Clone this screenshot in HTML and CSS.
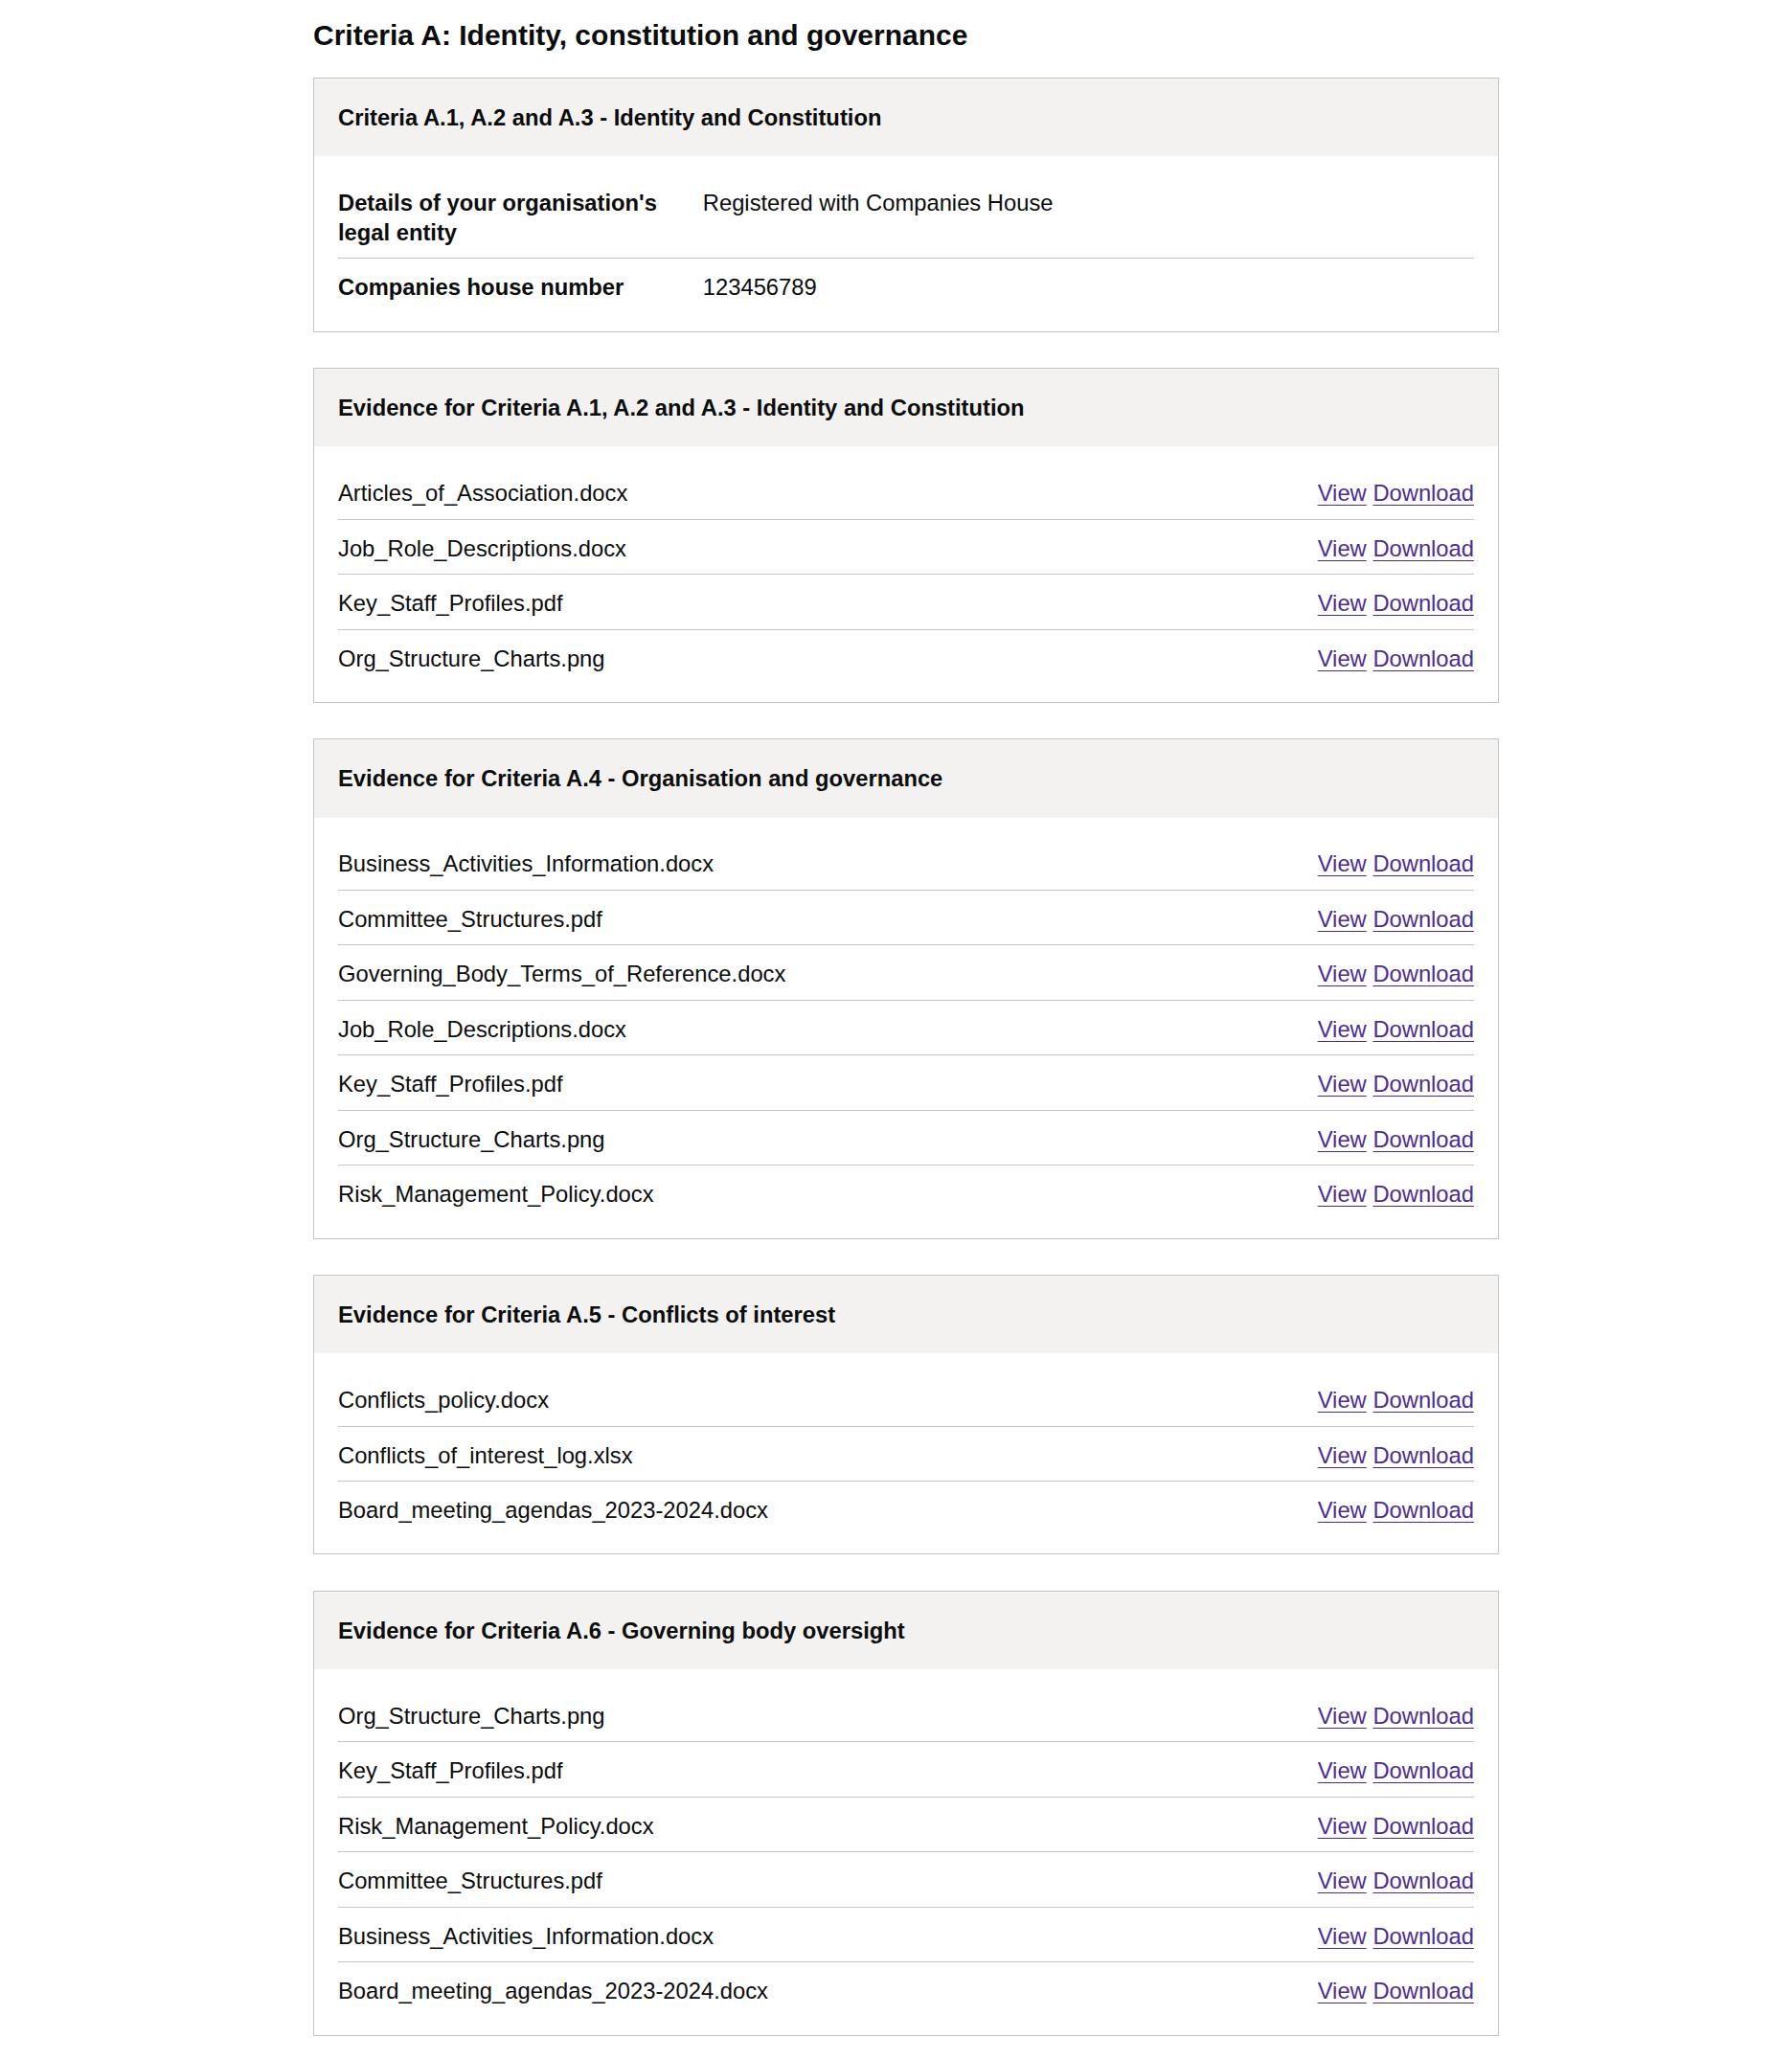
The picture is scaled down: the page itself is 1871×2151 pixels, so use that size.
FILE: index.html
```html
<!DOCTYPE html>
<html lang="en">
<head>
<meta charset="utf-8">
<title>Criteria A: Identity, constitution and governance</title>
<link rel="stylesheet" href="styles.css">
</head>
<body>
<main class="page">
  <h2 class="heading">Criteria A: Identity, constitution and governance</h2>

  <section class="card">
    <div class="card-head"><h3 class="card-title">Criteria A.1, A.2 and A.3 - Identity and Constitution</h3></div>
    <div class="card-body">
      <dl class="summary">
        <div class="summary-row">
          <dt class="summary-key">Details of your organisation's legal entity</dt>
          <dd class="summary-value">Registered with Companies House</dd>
        </div>
        <div class="summary-row">
          <dt class="summary-key">Companies house number</dt>
          <dd class="summary-value">123456789</dd>
        </div>
      </dl>
    </div>
  </section>

  <section class="card">
    <div class="card-head"><h3 class="card-title">Evidence for Criteria A.1, A.2 and A.3 - Identity and Constitution</h3></div>
    <div class="card-body">
      <ul class="files">
        <li class="file-row"><span class="file-name">Articles_of_Association.docx</span><span class="file-actions"><a href="#" class="link">View</a> <a href="#" class="link">Download</a></span></li>
        <li class="file-row"><span class="file-name">Job_Role_Descriptions.docx</span><span class="file-actions"><a href="#" class="link">View</a> <a href="#" class="link">Download</a></span></li>
        <li class="file-row"><span class="file-name">Key_Staff_Profiles.pdf</span><span class="file-actions"><a href="#" class="link">View</a> <a href="#" class="link">Download</a></span></li>
        <li class="file-row"><span class="file-name">Org_Structure_Charts.png</span><span class="file-actions"><a href="#" class="link">View</a> <a href="#" class="link">Download</a></span></li>
      </ul>
    </div>
  </section>

  <section class="card">
    <div class="card-head"><h3 class="card-title">Evidence for Criteria A.4 - Organisation and governance</h3></div>
    <div class="card-body">
      <ul class="files">
        <li class="file-row"><span class="file-name">Business_Activities_Information.docx</span><span class="file-actions"><a href="#" class="link">View</a> <a href="#" class="link">Download</a></span></li>
        <li class="file-row"><span class="file-name">Committee_Structures.pdf</span><span class="file-actions"><a href="#" class="link">View</a> <a href="#" class="link">Download</a></span></li>
        <li class="file-row"><span class="file-name">Governing_Body_Terms_of_Reference.docx</span><span class="file-actions"><a href="#" class="link">View</a> <a href="#" class="link">Download</a></span></li>
        <li class="file-row"><span class="file-name">Job_Role_Descriptions.docx</span><span class="file-actions"><a href="#" class="link">View</a> <a href="#" class="link">Download</a></span></li>
        <li class="file-row"><span class="file-name">Key_Staff_Profiles.pdf</span><span class="file-actions"><a href="#" class="link">View</a> <a href="#" class="link">Download</a></span></li>
        <li class="file-row"><span class="file-name">Org_Structure_Charts.png</span><span class="file-actions"><a href="#" class="link">View</a> <a href="#" class="link">Download</a></span></li>
        <li class="file-row"><span class="file-name">Risk_Management_Policy.docx</span><span class="file-actions"><a href="#" class="link">View</a> <a href="#" class="link">Download</a></span></li>
      </ul>
    </div>
  </section>

  <section class="card">
    <div class="card-head"><h3 class="card-title">Evidence for Criteria A.5 - Conflicts of interest</h3></div>
    <div class="card-body">
      <ul class="files">
        <li class="file-row"><span class="file-name">Conflicts_policy.docx</span><span class="file-actions"><a href="#" class="link">View</a> <a href="#" class="link">Download</a></span></li>
        <li class="file-row"><span class="file-name">Conflicts_of_interest_log.xlsx</span><span class="file-actions"><a href="#" class="link">View</a> <a href="#" class="link">Download</a></span></li>
        <li class="file-row"><span class="file-name">Board_meeting_agendas_2023-2024.docx</span><span class="file-actions"><a href="#" class="link">View</a> <a href="#" class="link">Download</a></span></li>
      </ul>
    </div>
  </section>

  <section class="card">
    <div class="card-head"><h3 class="card-title">Evidence for Criteria A.6 - Governing body oversight</h3></div>
    <div class="card-body">
      <ul class="files">
        <li class="file-row"><span class="file-name">Org_Structure_Charts.png</span><span class="file-actions"><a href="#" class="link">View</a> <a href="#" class="link">Download</a></span></li>
        <li class="file-row"><span class="file-name">Key_Staff_Profiles.pdf</span><span class="file-actions"><a href="#" class="link">View</a> <a href="#" class="link">Download</a></span></li>
        <li class="file-row"><span class="file-name">Risk_Management_Policy.docx</span><span class="file-actions"><a href="#" class="link">View</a> <a href="#" class="link">Download</a></span></li>
        <li class="file-row"><span class="file-name">Committee_Structures.pdf</span><span class="file-actions"><a href="#" class="link">View</a> <a href="#" class="link">Download</a></span></li>
        <li class="file-row"><span class="file-name">Business_Activities_Information.docx</span><span class="file-actions"><a href="#" class="link">View</a> <a href="#" class="link">Download</a></span></li>
        <li class="file-row"><span class="file-name">Board_meeting_agendas_2023-2024.docx</span><span class="file-actions"><a href="#" class="link">View</a> <a href="#" class="link">Download</a></span></li>
      </ul>
    </div>
  </section>
</main>
</body>
</html>
```

FILE: styles.css
```css
* {
  box-sizing: border-box;
}

html, body {
  margin: 0;
  padding: 0;
  background: #ffffff;
}

body {
  font-family: "Liberation Sans", Arial, sans-serif;
  color: #0b0c0c;
  font-size: 23.75px;
  line-height: 31.25px;
}

.page {
  width: 1238px;
  margin: 0 0 0 327px;
  padding: 18px 0 30px;
}

.heading {
  margin: 0 0 25px;
  font-size: 30px;
  line-height: 37.5px;
  font-weight: 700;
}

.card {
  border: 1px solid #c3c5c7;
  margin-bottom: 37.5px;
}

.card-head {
  background: #f3f2f1;
  padding: 25px 25px;
}

.card-title {
  margin: 0;
  font-size: 23.75px;
  line-height: 31.25px;
  font-weight: 700;
}

.card-body {
  padding: 18.75px 25px;
}

.summary {
  margin: 0;
}

.summary-row {
  display: grid;
  grid-template-columns: calc(30% + 25px) 1fr;
  border-bottom: 1px solid #c3c5c7;
}

.summary-row:last-child {
  border-bottom: none;
}

.summary-key {
  font-weight: 700;
  padding: 14px 25px 11.25px 0;
  margin: 0;
}

.summary-value {
  margin: 0;
  padding: 14px 0 11.25px;
}

.files {
  list-style: none;
  margin: 0;
  padding: 0;
}

.file-row {
  display: flex;
  justify-content: space-between;
  align-items: baseline;
  padding: 14px 0 11.25px;
  border-bottom: 1px solid #c3c5c7;
}

.file-row:last-child {
  border-bottom: none;
}

.file-actions {
  white-space: nowrap;
}

.link {
  color: #4c2c92;
  text-decoration: underline;
  text-decoration-thickness: 1.25px;
  text-underline-offset: 3.75px;
}
```
